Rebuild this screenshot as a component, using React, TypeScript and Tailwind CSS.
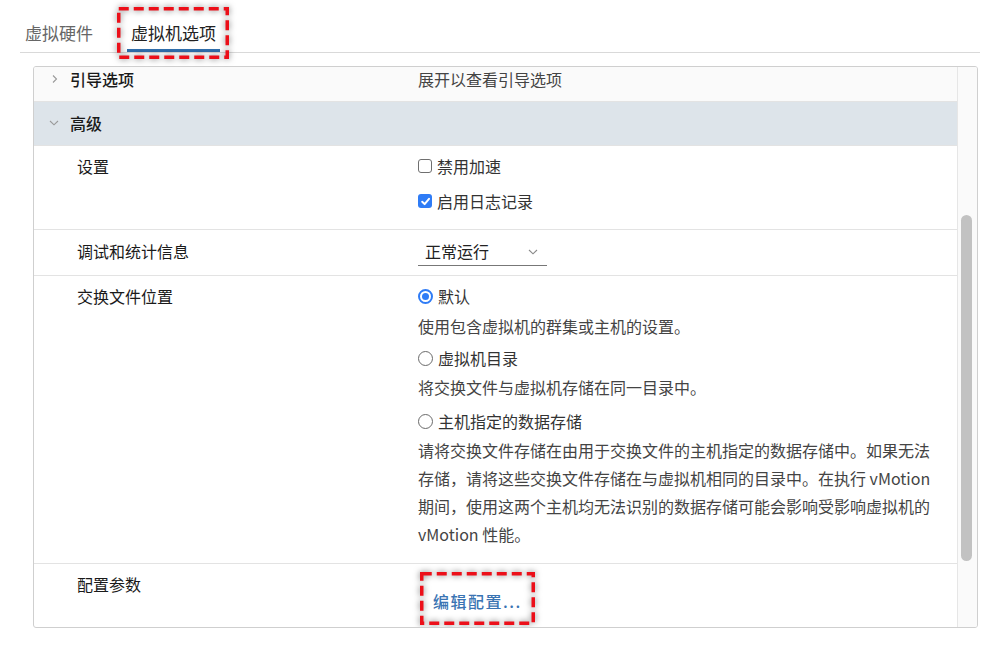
import React from "react";

const font = { fontFamily: '"Noto Sans CJK SC", "Noto Sans", sans-serif' };

function ChevronRight() {
  return (
    <svg width="10" height="10" viewBox="0 0 10 10" className="block">
      <path d="M3 1.5 L6.5 5 L3 8.5" fill="none" stroke="#9a9a9a" strokeWidth="1.1" />
    </svg>
  );
}
function ChevronDown({ color = "#9a9a9a" }: { color?: string }) {
  return (
    <svg width="12" height="10" viewBox="0 0 12 10" className="block">
      <path d="M2 3 L6 6.8 L10 3" fill="none" stroke={color} strokeWidth="1.1" />
    </svg>
  );
}

function Checkbox({ checked }: { checked?: boolean }) {
  if (checked)
    return (
      <span className="w-[14px] h-[14px] rounded-[3px] bg-[#2f7cf6] flex items-center justify-center">
        <svg width="11" height="11" viewBox="0 0 10 10">
          <path d="M2 5.2 L4.2 7.4 L8.2 2.6" fill="none" stroke="white" strokeWidth="1.8" strokeLinecap="round" strokeLinejoin="round" />
        </svg>
      </span>
    );
  return <span className="w-[14px] h-[14px] rounded-[3px] border border-[#6f6f6f] bg-white" />;
}

function Radio({ checked }: { checked?: boolean }) {
  if (checked)
    return (
      <span className="w-[15px] h-[15px] rounded-full border-[2px] border-[#2f7cf6] bg-white flex items-center justify-center">
        <span className="w-[7px] h-[7px] rounded-full bg-[#2f7cf6]" />
      </span>
    );
  return <span className="w-[15px] h-[15px] rounded-full border border-[#6a6a6a] bg-white" />;
}

function RedBox({ className, w, h }: { className: string; w: number; h: number }) {
  return (
    <div
      className={"absolute pointer-events-none " + className}
      style={{ width: w, height: h, filter: "drop-shadow(0 0 3px rgba(0,0,0,0.55))" }}
    >
      <svg width={w} height={h} className="block overflow-visible">
        <rect
          x="1.75"
          y="1.75"
          width={w - 3.5}
          height={h - 3.5}
          fill="none"
          stroke="#ec0f19"
          strokeWidth="3.5"
          strokeDasharray="10 5"
        />
      </svg>
    </div>
  );
}

export default function App() {
  return (
    <div className="w-[1000px] h-[661px] bg-white relative overflow-hidden text-[16px]" style={font}>
      {/* Tabs */}
      <div className="mx-[20px] flex items-end border-b border-[#d9d9d9]">
        <div className="pl-[5px] pt-[22px] pb-[8px] leading-[22px] text-[17px] text-[#666]">虚拟硬件</div>
        <div className="relative ml-[34px]">
          <div className="px-[4px] pt-[22px] pb-[5px] leading-[22px] text-[17px] text-[#222] border-b-[3px] border-[#2f6eac]">
            虚拟机选项
          </div>
          <RedBox className="left-[-10px] top-[7px]" w={112} h={52} />
        </div>
      </div>

      {/* Panel */}
      <div className="ml-[33px] mt-[13px] w-[945px] h-[562px] border border-[#cfcfcf] rounded-[3px] flex overflow-hidden">
        <div className="flex-1 flex flex-col">
          {/* 引导选项 */}
          <div className="h-[35px] bg-[#fafafa] border-b border-[#e3e3e3] flex items-start pt-[1px]">
            <div className="w-[384px] flex items-center h-[22px]">
              <div className="ml-[16px] w-[20px] flex items-center">
                <ChevronRight />
              </div>
              <span className="leading-[22px] text-[#1a1a1a] font-medium">引导选项</span>
            </div>
            <div className="leading-[22px] text-[#444]">展开以查看引导选项</div>
          </div>

          {/* 高级 */}
          <div className="h-[44px] bg-[#dde4ea] border-b border-[#e3e3e3] flex items-center pb-[1px]">
            <div className="ml-[14px] w-[22px] flex items-center">
              <ChevronDown />
            </div>
            <span className="leading-[22px] text-[#1a1a1a] font-medium">高级</span>
          </div>

          {/* 设置 */}
          <div className="h-[84px] border-b border-[#e3e3e3] flex">
            <div className="w-[384px] pl-[43px] pt-[9px] leading-[22px] text-[#1a1a1a]">设置</div>
            <div className="pt-[9px] flex flex-col gap-[13px] text-[#333]">
              <label className="flex items-center gap-[5px] leading-[22px]">
                <Checkbox />
                <span>禁用加速</span>
              </label>
              <label className="flex items-center gap-[5px] leading-[22px]">
                <Checkbox checked />
                <span>启用日志记录</span>
              </label>
            </div>
          </div>

          {/* 调试和统计信息 */}
          <div className="h-[46px] border-b border-[#e3e3e3] flex">
            <div className="w-[384px] pl-[43px] pt-[10px] leading-[22px] text-[#1a1a1a]">调试和统计信息</div>
            <div className="pt-[10px]">
              <div className="w-[129px] h-[26px] border-b border-[#777] flex items-start justify-between pl-[7px] pr-[8px]">
                <span className="leading-[22px] text-[#222]">正常运行</span>
                <span className="pt-[7px]">
                  <ChevronDown color="#8a8a8a" />
                </span>
              </div>
            </div>
          </div>

          {/* 交换文件位置 */}
          <div className="h-[288px] border-b border-[#e3e3e3] flex">
            <div className="w-[384px] pl-[43px] pt-[9px] leading-[22px] text-[#1a1a1a]">交换文件位置</div>
            <div className="pt-[6px] w-[522px] text-[#444] leading-[28px]">
              <div className="flex items-center gap-[5px] text-[#333]">
                <Radio checked />
                <span>默认</span>
              </div>
              <div className="mt-[2px]">使用包含虚拟机的群集或主机的设置。</div>
              <div className="mt-[4px] flex items-center gap-[5px] text-[#333]">
                <Radio />
                <span>虚拟机目录</span>
              </div>
              <div className="mt-[1px]">将交换文件与虚拟机存储在同一目录中。</div>
              <div className="mt-[6px] flex items-center gap-[5px] text-[#333]">
                <Radio />
                <span>主机指定的数据存储</span>
              </div>
              <div className="mt-[1px]">
                请将交换文件存储在由用于交换文件的主机指定的数据存储中。如果无法存储，请将这些交换文件存储在与虚拟机相同的目录中。在执行 vMotion
                期间，使用这两个主机均无法识别的数据存储可能会影响受影响虚拟机的 vMotion 性能。
              </div>
            </div>
          </div>

          {/* 配置参数 */}
          <div className="flex-1 flex">
            <div className="w-[384px] pl-[43px] pt-[9px] leading-[22px] text-[#1a1a1a]">配置参数</div>
            <div className="relative pt-[25px] pl-[15px]">
              <span className="leading-[22px] text-[#3a74b3] font-medium tracking-[1.5px]">编辑配置...</span>
              <RedBox className="left-[2px] top-[8px]" w={115} h={53} />
            </div>
          </div>
        </div>

        {/* Scrollbar */}
        <div className="w-[20px] bg-[#fafafa] border-l border-[#e6e6e6] flex flex-col">
          <div className="h-[148px]" />
          <div className="ml-[3px] w-[11px] h-[346px] rounded-full bg-[#c2c2c2]" />
        </div>
      </div>
    </div>
  );
}
